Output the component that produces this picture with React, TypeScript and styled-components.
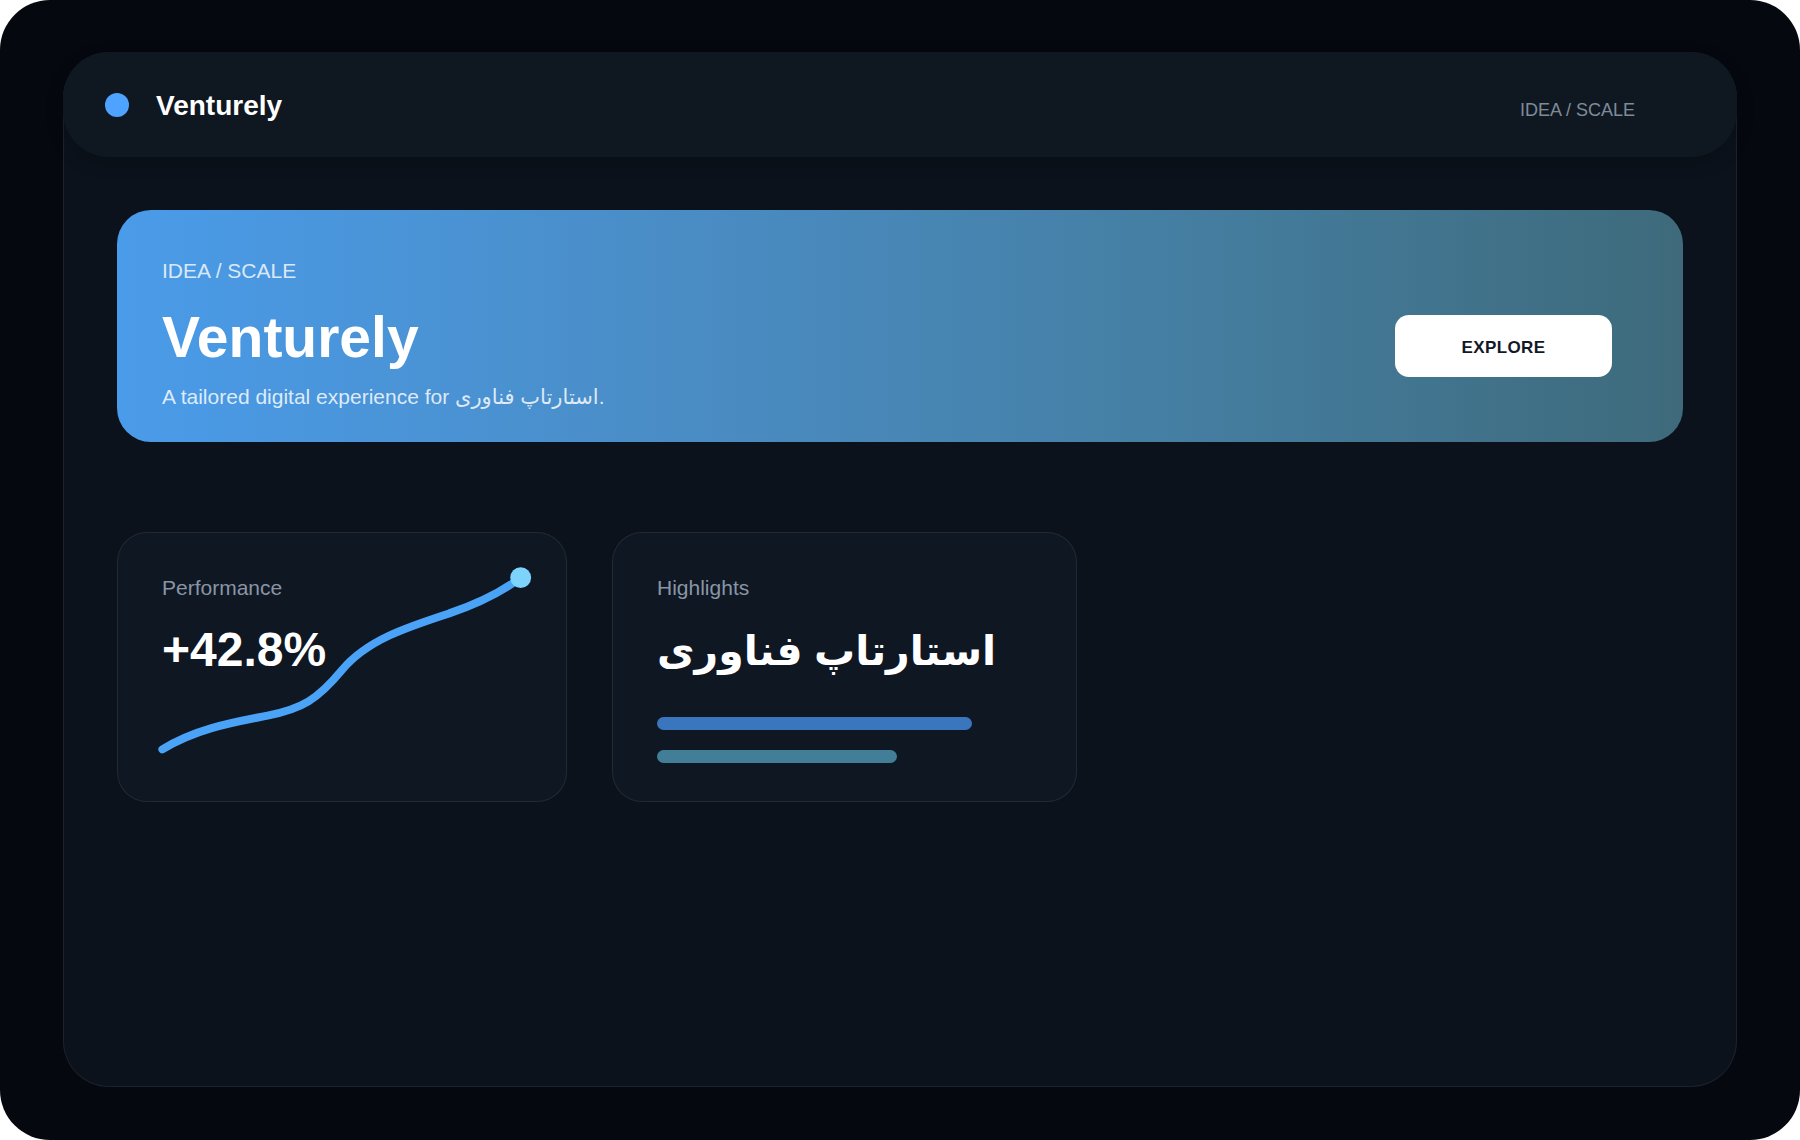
import styled, { createGlobalStyle } from "styled-components";

const GlobalStyle = createGlobalStyle`
  html, body {
    margin: 0;
    padding: 0;
    background: #ffffff;
  }
  body {
    font-family: "Liberation Sans", "DejaVu Sans", sans-serif;
  }
  * {
    box-sizing: border-box;
  }
`;

const Frame = styled.div`
  width: 1800px;
  height: 1140px;
  background: #05090f;
  border-radius: 50px;
  padding: 52px 63px 53px;
`;

const Panel = styled.main`
  height: 100%;
  background: #0b121b;
  border: 1px solid rgba(255, 255, 255, 0.07);
  border-radius: 46px;
  display: flex;
  flex-direction: column;
`;

const TopBar = styled.header`
  height: 105px;
  margin: -1px -1px 0;
  background: #0f1821;
  border-radius: 46px;
  display: flex;
  align-items: center;
  padding: 0 102px 0 42px;
  box-shadow: 0 6px 18px rgba(0, 0, 0, 0.18);
`;

const Dot = styled.span`
  width: 24px;
  height: 24px;
  border-radius: 50%;
  background: #4da3ff;
  margin-right: 27px;
`;

const Brand = styled.div`
  font-size: 28px;
  font-weight: 700;
  color: #ffffff;
  flex: 1;
  padding-top: 2px;
`;

const TopTag = styled.div`
  font-size: 18px;
  color: #7f8b99;
  padding-top: 12px;
`;

const Content = styled.section`
  padding: 53px 53px;
  display: flex;
  flex-direction: column;
`;

const Hero = styled.div`
  height: 232px;
  border-radius: 34px;
  background: linear-gradient(90deg, #4a9be9 0%, #4a8dc6 35%, #447d9f 70%, #3e6a7b 100%);
  display: flex;
  align-items: flex-start;
  padding: 49px 71px 0 45px;
`;

const HeroText = styled.div`
  flex: 1;
  display: flex;
  flex-direction: column;
`;

const Eyebrow = styled.div`
  font-size: 21px;
  line-height: 24px;
  color: rgba(255, 255, 255, 0.8);
`;

const HeroTitle = styled.h1`
  margin: 22px 0 0;
  font-size: 57px;
  line-height: 64px;
  font-weight: 700;
  color: #ffffff;
`;

const HeroSub = styled.p`
  margin: 15px 0 0;
  font-size: 21px;
  line-height: 26px;
  color: rgba(255, 255, 255, 0.82);
`;

const ExploreButton = styled.button`
  width: 217px;
  height: 62px;
  margin-top: 56px;
  padding: 4px 0 0;
  border: none;
  border-radius: 14px;
  background: #ffffff;
  color: #111827;
  font-family: inherit;
  font-size: 17px;
  font-weight: 700;
  letter-spacing: 0.4px;
`;

const CardRow = styled.div`
  margin-top: 90px;
  display: flex;
  gap: 45px;
`;

const Card = styled.div<{ $width: number }>`
  position: relative;
  width: ${(p) => p.$width}px;
  height: 270px;
  background: #0f1723;
  border: 1px solid rgba(255, 255, 255, 0.08);
  border-radius: 30px;
  padding: 43px 44px;
  overflow: hidden;
`;

const CardLabel = styled.div`
  font-size: 21px;
  line-height: 24px;
  color: #8995a5;
`;

const BigValue = styled.div`
  position: relative;
  z-index: 1;
  margin-top: 22px;
  font-size: 48px;
  line-height: 56px;
  font-weight: 700;
  color: #ffffff;
`;

const PersianTitle = styled.div`
  margin-top: 21px;
  font-size: 41px;
  line-height: 60px;
  font-weight: 700;
  color: #ffffff;
  direction: rtl;
  text-align: left;
  width: fit-content;
`;

const Bars = styled.div`
  margin-top: 36px;
  display: flex;
  flex-direction: column;
  gap: 20px;
`;

const Bar = styled.div<{ $width: number; $color: string }>`
  width: ${(p) => p.$width}px;
  height: 13px;
  border-radius: 7px;
  background: ${(p) => p.$color};
`;

const Chart = styled.svg`
  position: absolute;
  inset: 0;
  width: 100%;
  height: 100%;
`;

const App = () => {
  return (
    <>
      <GlobalStyle />
      <Frame>
        <Panel>
          <TopBar>
            <Dot />
            <Brand>Venturely</Brand>
            <TopTag>IDEA / SCALE</TopTag>
          </TopBar>
          <Content>
            <Hero>
              <HeroText>
                <Eyebrow>IDEA / SCALE</Eyebrow>
                <HeroTitle>Venturely</HeroTitle>
                <HeroSub>A tailored digital experience for استارتاپ فناوری.</HeroSub>
              </HeroText>
              <ExploreButton>EXPLORE</ExploreButton>
            </Hero>
            <CardRow>
              <Card $width={450}>
                <Chart viewBox="0 0 450 270">
                  <path
                    d="M44 218 C 80 196, 120 190, 150 184 C 185 177, 200 168, 225 138 C 250 108, 290 95, 333 81 C 360 72, 385 60, 405 45"
                    fill="none"
                    stroke="#4aa3f6"
                    strokeWidth="8"
                    strokeLinecap="round"
                  />
                  <circle cx="405" cy="45" r="10.5" fill="#7dd3fc" />
                </Chart>
                <CardLabel>Performance</CardLabel>
                <BigValue>+42.8%</BigValue>
              </Card>
              <Card $width={465}>
                <CardLabel>Highlights</CardLabel>
                <PersianTitle>استارتاپ فناوری</PersianTitle>
                <Bars>
                  <Bar $width={315} $color="#3a76bd" />
                  <Bar $width={240} $color="#427e98" />
                </Bars>
              </Card>
            </CardRow>
          </Content>
        </Panel>
      </Frame>
    </>
  );
};

export default App;
